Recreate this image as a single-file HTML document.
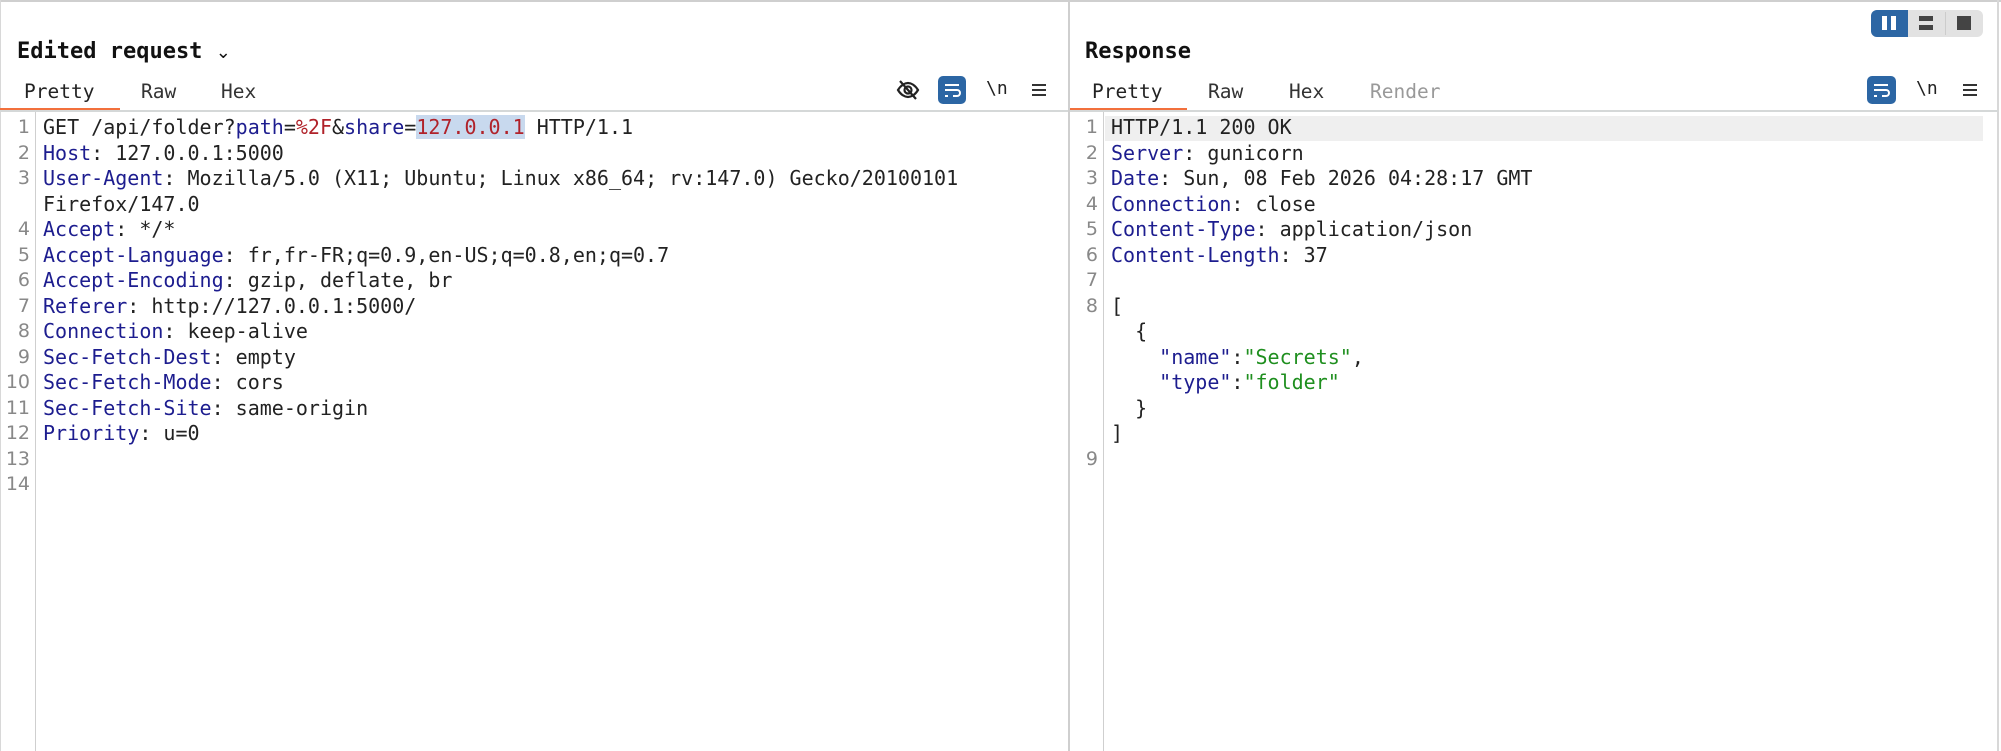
<!DOCTYPE html>
<html><head><meta charset="utf-8"><style>
*{margin:0;padding:0;box-sizing:border-box}
body{width:2001px;height:751px;background:#fff;position:relative;overflow:hidden;font-family:"DejaVu Sans",sans-serif}
.abs{position:absolute}
.title{font-family:"DejaVu Sans Mono",monospace;font-weight:bold;font-size:22px;color:#111;top:39px}
.tab{font-family:"DejaVu Sans Mono",monospace;font-size:19.5px;color:#333;top:80px}
.code{font-family:"DejaVu Sans Mono",monospace;font-size:20px;line-height:25.5px;color:#222;white-space:pre}
.ln{font-family:"DejaVu Sans",sans-serif;font-size:19px;line-height:25.5px;color:#888;text-align:right;white-space:pre}
.k{color:#1d1d8f}.r{color:#b0222a}.g{color:#1f8f1f}
.sel{background:#c8d9ee}
</style></head><body>
<div class="abs" style="left:0;top:0;width:2001px;height:2px;background:#cfcfcf"></div>
<div class="abs" style="left:1997px;top:0;width:2px;height:751px;background:#d8d8d8"></div>
<div class="abs" style="left:1068px;top:0;width:2px;height:751px;background:#cfcfcf"></div>
<div class="abs" style="left:0;top:0;width:1px;height:751px;background:#d8d8d8"></div>

<!-- left panel -->
<div class="abs title" style="left:17px">Edited request <span style="font-weight:normal;font-size:18px;font-family:'DejaVu Sans',sans-serif">&#8964;</span></div>
<div class="abs tab" style="left:24px;color:#222">Pretty</div>
<div class="abs tab" style="left:141px">Raw</div>
<div class="abs tab" style="left:221px">Hex</div>
<div class="abs" style="left:0;top:108px;width:120px;height:3px;background:#f2703c"></div>
<div class="abs" style="left:0;top:110px;width:1068px;height:2px;background:#d5d8d8"></div>
<svg class="abs" style="left:895px;top:78px" width="26" height="24" viewBox="0 0 26 24"><path d="M3 12c3-5 7-7 10-7s7 2 10 7c-3 5-7 7-10 7s-7-2-10-7z" fill="none" stroke="#222" stroke-width="2.2"/><circle cx="13" cy="12" r="3.5" fill="none" stroke="#222" stroke-width="2.2"/><path d="M5 3l16 18" stroke="#222" stroke-width="2.2"/></svg>
<div class="abs" style="left:938px;top:76px;width:28px;height:28px;border-radius:5px;background:#2c66a4"></div>
<svg class="abs" style="left:938px;top:76px" width="28" height="28" viewBox="0 0 28 28"><path d="M7 9h14M7 14h12a3 3 0 0 1 0 6h-4M7 20h3" fill="none" stroke="#fff" stroke-width="2"/></svg>
<div class="abs" style="left:986px;top:78px;font-family:'DejaVu Sans Mono',monospace;font-size:18px;color:#222">\n</div>
<svg class="abs" style="left:1031px;top:82px" width="16" height="16"><path d="M1 3h14M1 8h14M1 13h14" stroke="#333" stroke-width="2"/></svg>

<div class="abs" style="left:35px;top:112px;width:1px;height:639px;background:#cfcfcf"></div>
<div class="abs ln" style="left:0;top:115px;width:30px">1
2
3

4
5
6
7
8
9
10
11
12
13
14</div>
<div class="abs code" style="left:43px;top:115px">GET /api/folder?<span class="k">path</span>=<span class="r">%2F</span>&amp;<span class="k">share</span>=<span class="r sel">127.0.0.1</span> HTTP/1.1
<span class="k">Host</span>: 127.0.0.1:5000
<span class="k">User-Agent</span>: Mozilla/5.0 (X11; Ubuntu; Linux x86_64; rv:147.0) Gecko/20100101
Firefox/147.0
<span class="k">Accept</span>: */*
<span class="k">Accept-Language</span>: fr,fr-FR;q=0.9,en-US;q=0.8,en;q=0.7
<span class="k">Accept-Encoding</span>: gzip, deflate, br
<span class="k">Referer</span>: http://127.0.0.1:5000/
<span class="k">Connection</span>: keep-alive
<span class="k">Sec-Fetch-Dest</span>: empty
<span class="k">Sec-Fetch-Mode</span>: cors
<span class="k">Sec-Fetch-Site</span>: same-origin
<span class="k">Priority</span>: u=0</div>

<!-- right panel -->
<div class="abs" style="left:1871px;top:10px;width:112px;height:27px;border-radius:6px;background:#e2e2e2"></div>
<div class="abs" style="left:1871px;top:10px;width:37px;height:27px;border-radius:6px 0 0 6px;background:#2c66a4"></div>
<div class="abs" style="left:1945px;top:12px;width:1px;height:23px;background:#ccc"></div>
<div class="abs" style="left:1882px;top:16px;width:5px;height:14px;background:#fff"></div>
<div class="abs" style="left:1891px;top:16px;width:5px;height:14px;background:#fff"></div>
<div class="abs" style="left:1919px;top:16px;width:14px;height:5px;background:#444"></div>
<div class="abs" style="left:1919px;top:25px;width:14px;height:5px;background:#444"></div>
<div class="abs" style="left:1957px;top:16px;width:14px;height:14px;background:#444"></div>

<div class="abs title" style="left:1085px">Response</div>
<div class="abs tab" style="left:1092px;color:#222">Pretty</div>
<div class="abs tab" style="left:1208px">Raw</div>
<div class="abs tab" style="left:1289px">Hex</div>
<div class="abs tab" style="left:1370px;color:#999">Render</div>
<div class="abs" style="left:1070px;top:108px;width:117px;height:3px;background:#f2703c"></div>
<div class="abs" style="left:1070px;top:110px;width:928px;height:2px;background:#d5d8d8"></div>
<div class="abs" style="left:1867px;top:76px;width:29px;height:28px;border-radius:5px;background:#2c66a4"></div>
<svg class="abs" style="left:1867px;top:76px" width="28" height="28" viewBox="0 0 28 28"><path d="M7 9h14M7 14h12a3 3 0 0 1 0 6h-4M7 20h3" fill="none" stroke="#fff" stroke-width="2"/></svg>
<div class="abs" style="left:1916px;top:78px;font-family:'DejaVu Sans Mono',monospace;font-size:18px;color:#222">\n</div>
<svg class="abs" style="left:1962px;top:82px" width="16" height="16"><path d="M1 3h14M1 8h14M1 13h14" stroke="#333" stroke-width="2"/></svg>

<div class="abs" style="left:1103px;top:112px;width:1px;height:639px;background:#cfcfcf"></div>
<div class="abs" style="left:1105px;top:116px;width:878px;height:25px;background:#efefef"></div>
<div class="abs ln" style="left:1070px;top:115px;width:28px">1
2
3
4
5
6
7
8





9</div>
<div class="abs code" style="left:1111px;top:115px">HTTP/1.1 200 OK
<span class="k">Server</span>: gunicorn
<span class="k">Date</span>: Sun, 08 Feb 2026 04:28:17 GMT
<span class="k">Connection</span>: close
<span class="k">Content-Type</span>: application/json
<span class="k">Content-Length</span>: 37

[
  {
    <span class="k">"name"</span>:<span class="g">"Secrets"</span>,
    <span class="k">"type"</span>:<span class="g">"folder"</span>
  }
]</div>
</body></html>
